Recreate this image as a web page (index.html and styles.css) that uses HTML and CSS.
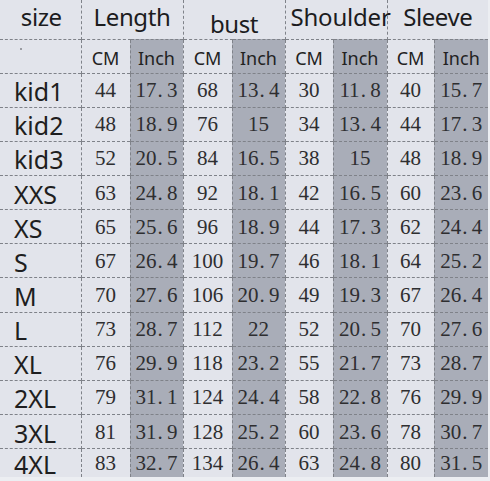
FILE: index.html
```html
<!DOCTYPE html>
<html>
<head>
<meta charset="utf-8">
<link rel="stylesheet" href="styles.css">
</head>
<body>
<table class="chart">
  <colgroup>
    <col class="c-size"><col class="c-cm"><col class="c-in"><col class="c-cm"><col class="c-in"><col class="c-cm2"><col class="c-in2"><col class="c-cm3"><col class="c-in2">
  </colgroup>
  <thead>
    <tr class="h1">
      <th class="size-h">size</th>
      <th colspan="2" class="grp">Length</th>
      <th colspan="2" class="grp low">bust</th>
      <th colspan="2" class="grp tight">Shoulder</th>
      <th colspan="2" class="grp">Sleeve</th>
    </tr>
    <tr class="h2">
      <th class="size-h"><span class="speck"></span></th>
      <th class="cm">CM</th><th class="in">Inch</th>
      <th class="cm">CM</th><th class="in">Inch</th>
      <th class="cm">CM</th><th class="in">Inch</th>
      <th class="cm">CM</th><th class="in">Inch</th>
    </tr>
  </thead>
  <tbody>
    <tr><th>kid1</th><td>44</td><td class="in">17<span class="dot">.</span>3</td><td>68</td><td class="in">13<span class="dot">.</span>4</td><td>30</td><td class="in">11<span class="dot">.</span>8</td><td>40</td><td class="in">15<span class="dot">.</span>7</td></tr>
    <tr><th>kid2</th><td>48</td><td class="in">18<span class="dot">.</span>9</td><td>76</td><td class="in">15</td><td>34</td><td class="in">13<span class="dot">.</span>4</td><td>44</td><td class="in">17<span class="dot">.</span>3</td></tr>
    <tr><th>kid3</th><td>52</td><td class="in">20<span class="dot">.</span>5</td><td>84</td><td class="in">16<span class="dot">.</span>5</td><td>38</td><td class="in">15</td><td>48</td><td class="in">18<span class="dot">.</span>9</td></tr>
    <tr><th>XXS</th><td>63</td><td class="in">24<span class="dot">.</span>8</td><td>92</td><td class="in">18<span class="dot">.</span>1</td><td>42</td><td class="in">16<span class="dot">.</span>5</td><td>60</td><td class="in">23<span class="dot">.</span>6</td></tr>
    <tr><th>XS</th><td>65</td><td class="in">25<span class="dot">.</span>6</td><td>96</td><td class="in">18<span class="dot">.</span>9</td><td>44</td><td class="in">17<span class="dot">.</span>3</td><td>62</td><td class="in">24<span class="dot">.</span>4</td></tr>
    <tr><th>S</th><td>67</td><td class="in">26<span class="dot">.</span>4</td><td>100</td><td class="in">19<span class="dot">.</span>7</td><td>46</td><td class="in">18<span class="dot">.</span>1</td><td>64</td><td class="in">25<span class="dot">.</span>2</td></tr>
    <tr><th>M</th><td>70</td><td class="in">27<span class="dot">.</span>6</td><td>106</td><td class="in">20<span class="dot">.</span>9</td><td>49</td><td class="in">19<span class="dot">.</span>3</td><td>67</td><td class="in">26<span class="dot">.</span>4</td></tr>
    <tr><th>L</th><td>73</td><td class="in">28<span class="dot">.</span>7</td><td>112</td><td class="in">22</td><td>52</td><td class="in">20<span class="dot">.</span>5</td><td>70</td><td class="in">27<span class="dot">.</span>6</td></tr>
    <tr><th>XL</th><td>76</td><td class="in">29<span class="dot">.</span>9</td><td>118</td><td class="in">23<span class="dot">.</span>2</td><td>55</td><td class="in">21<span class="dot">.</span>7</td><td>73</td><td class="in">28<span class="dot">.</span>7</td></tr>
    <tr><th>2XL</th><td>79</td><td class="in">31<span class="dot">.</span>1</td><td>124</td><td class="in">24<span class="dot">.</span>4</td><td>58</td><td class="in">22<span class="dot">.</span>8</td><td>76</td><td class="in">29<span class="dot">.</span>9</td></tr>
    <tr><th>3XL</th><td>81</td><td class="in">31<span class="dot">.</span>9</td><td>128</td><td class="in">25<span class="dot">.</span>2</td><td>60</td><td class="in">23<span class="dot">.</span>6</td><td>78</td><td class="in">30<span class="dot">.</span>7</td></tr>
    <tr><th>4XL</th><td>83</td><td class="in">32<span class="dot">.</span>7</td><td>134</td><td class="in">26<span class="dot">.</span>4</td><td>63</td><td class="in">24<span class="dot">.</span>8</td><td>80</td><td class="in">31<span class="dot">.</span>5</td></tr>
  </tbody>
</table>
</body>
</html>
```
FILE: styles.css
```css
html, body {
  margin: 0;
  padding: 0;
  background: #eceef2;
}

.chart {
  border-collapse: collapse;
  table-layout: fixed;
  width: 488px;
  background: #e2e4eb;
  color: #1c1c1e;
}

.c-size { width: 81px; }
.c-cm { width: 49px; }
.c-in { width: 53px; }
.c-cm2 { width: 48px; }
.c-in2 { width: 54px; }
.c-cm3 { width: 47px; }

.chart th,
.chart td {
  padding: 0;
  border: 0 dashed #7f8289;
  text-align: center;
  vertical-align: middle;
  white-space: nowrap;
  overflow: visible;
  line-height: 20px;
}

/* header row 1 */
.h1 { height: 39px; }
.h1 th {
  font-family: "Noto Sans", sans-serif;
  font-weight: 400;
  font-size: 24px;
  letter-spacing: -0.4px;
  padding-bottom: 4px;
  border-left-width: 1px;
}
.h1 th:first-child { border-left-width: 0; }
.h1 .size-h { text-align: center; padding-left: 2px; }
.h1 .low { padding-top: 9px; padding-bottom: 0; }
.h1 .tight { letter-spacing: -0.2px; text-align: left; padding-left: 5px; }

/* header row 2 */
.h2 { height: 34px; }
.h2 th {
  font-family: "Noto Sans", sans-serif;
  font-weight: 400;
  font-size: 18px;
  border-top-width: 1px;
  border-left-width: 1px;
  padding-top: 3px;
  color: #222;
}
.h2 th:first-child { border-left-width: 0; position: relative; }

.speck {
  position: absolute;
  left: 20px;
  top: 8px;
  width: 2px;
  height: 2px;
  background: #9a9ca2;
}

/* body rows */
.chart tbody tr { height: 34.17px; }
.chart tbody tr:last-child { height: 28px; }

.chart tbody th {
  font-family: "Noto Sans", sans-serif;
  font-weight: 400;
  font-size: 25px;
  text-align: left;
  padding-left: 14px;
  padding-top: 2px;
  border-top-width: 1px;
  color: #1e1e20;
}

.chart tbody td {
  font-family: "Liberation Serif", "DejaVu Serif", serif;
  font-size: 21px;
  color: #2e2e30;
  border-top-width: 1px;
  border-left-width: 1px;
}

.chart .in {
  background: #a9adb8;
  border-left-width: 1px;
}

.dot {
  display: inline-block;
  width: 0.5em;
  text-align: left;
  padding-left: 1px;
  box-sizing: border-box;
}
```
